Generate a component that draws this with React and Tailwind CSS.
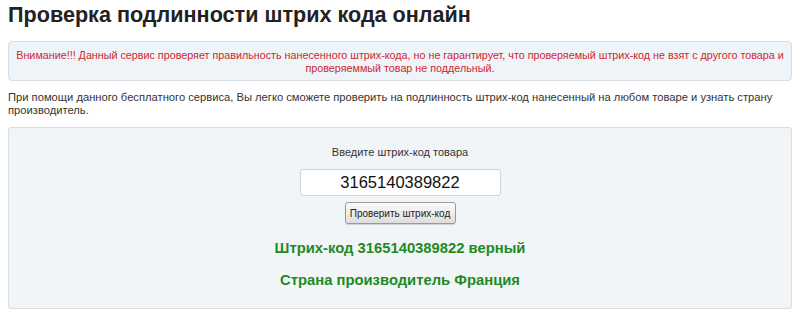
export default function App() {
  return (
    <div className="w-[800px] h-[318px] bg-white overflow-hidden px-2 text-[#333]" style={{ fontFamily: '"Liberation Sans", Arial, sans-serif' }}>
      <h1 className="pt-[2px] text-[21.6px] leading-[26px] font-bold text-[#222]">
        Проверка подлинности штрих кода онлайн
      </h1>

      <div className="mt-[13px] whitespace-nowrap rounded-[4px] border border-[#d3dee6] bg-[#eef4f8] pt-[7px] pb-[5px] text-center text-[10.75px] leading-[13px] text-[#d0262f]">
        Внимание!!! Данный сервис проверяет правильность нанесенного штрих-кода, но не гарантирует, что проверяемый штрих-код не взят с другого товара и
        <br />
        проверяеммый товар не поддельный.
      </div>

      <p className="mt-[10px] text-[11.2px] leading-[13px] text-[#333]">
        При помощи данного бесплатного сервиса, Вы легко сможете проверить на подлинность штрих-код нанесенный на любом товаре и узнать страну
        <br />
        производитель.
      </p>

      <div className="mt-[10px] flex h-[182px] flex-col items-center rounded-[3px] border border-[#d6dee4] bg-[#f1f5f8] pt-[17px]">
        <div className="text-[11px] leading-[14px] text-[#333]">Введите штрих-код товара</div>
        <input
          readOnly
          value="3165140389822"
          className="mt-[10px] h-[27px] w-[201px] rounded-[3px] border border-[#cfd4d8] bg-white text-center text-[16.5px] leading-[25px] text-[#111] outline-none"
          style={{ fontFamily: '"Liberation Sans", Arial, sans-serif' }}
        />
        <button
          className="mt-[6px] h-[22px] w-[111px] whitespace-nowrap rounded-[3px] border border-[#9a9a9a] bg-gradient-to-b from-[#fbfbfb] to-[#dedede] text-[10px] text-[#222] shadow-[0_1px_1px_rgba(0,0,0,0.15)]"
          style={{ fontFamily: '"Liberation Sans", Arial, sans-serif' }}
        >
          Проверить штрих-код
        </button>
        <div className="mt-[15px] text-[14.8px] leading-[18px] font-bold text-[#1f8a1f]">
          Штрих-код 3165140389822 верный
        </div>
        <div className="mt-[14px] text-[14.8px] leading-[18px] font-bold text-[#1f8a1f]">
          Страна производитель Франция
        </div>
      </div>
    </div>
  );
}
